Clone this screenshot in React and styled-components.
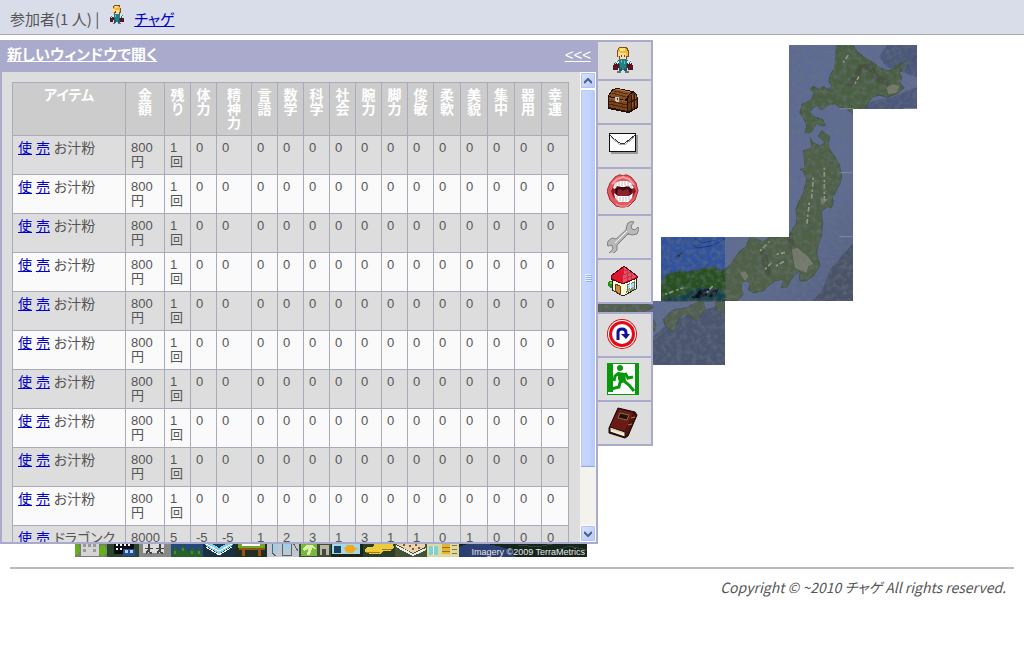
import React from 'react';
import styled, { createGlobalStyle } from 'styled-components';

const Global = createGlobalStyle`
  *, *::before, *::after { box-sizing: border-box; }
  body {
    margin: 0;
    background: #fff;
    color: #555;
    font-family: "Noto Sans CJK JP", "Liberation Sans", sans-serif;
    font-size: 14px;
    line-height: 20px;
    font-feature-settings: "palt";
  }
`;

const Page = styled.div`
  position: relative;
  min-width: 900px;
`;

const TopBar = styled.header`
  display: flex;
  align-items: center;
  gap: 10px;
  height: 35px;
  padding: 4px 10px 0;
  background: #d9dde9;
  border-bottom: 1px solid #aaaaaf;
  font-size: 15px;
  svg { margin-bottom: 8px; }
`;

const Link = styled.a`
  color: #0000c8;
  text-decoration: underline;
`;

const Maps = styled.main`
  display: flex;
  justify-content: center;
  gap: 10px;
  padding: 10px;
`;

const Town = styled.div`
  position: relative;
  width: 512px;
  height: 512px;
  svg { display: block; }
`;

const Credit = styled.small`
  position: absolute;
  right: 2px;
  bottom: 0;
  color: #e8e8e8;
  font-family: "Liberation Sans", sans-serif;
  font-size: 9px;
  line-height: 10px;
`;

const Country = styled.div`
  width: 352px;
  svg { display: block; }
`;

const Footer = styled.footer`
  margin: 0 10px;
  padding: 8px 8px;
  border-top: 2px solid #bbb;
  text-align: right;
  font-size: 14px;
  font-style: italic;
`;

const Overlay = styled.div`
  position: absolute;
  top: 40px;
  left: 0;
  display: flex;
  align-items: flex-start;
`;

const Panel = styled.section`
  display: flex;
  flex-direction: column;
  width: 598px;
  border: solid #aaaacc;
  border-width: 0 2px 2px;
  background: #ddd;
  font-family: "Liberation Sans", "Noto Sans CJK JP", sans-serif;
`;

const TitleBar = styled.div`
  display: flex;
  justify-content: space-between;
  padding: 5px 5px 7px;
  background: #aaaacc;
  font-size: 15px;
`;

const TitleLink = styled(Link)`
  color: #fff;
  font-weight: ${p => (p.$bold ? 700 : 400)};
`;

const PanelBody = styled.div`
  display: flex;
  height: 470px;
  overflow: hidden;
`;

const TableArea = styled.div`
  flex: 1;
  padding: 10px;
  overflow: hidden;
`;

const ItemTable = styled.table`
  width: 557px;
  table-layout: fixed;
  border-collapse: collapse;
  line-height: 14px;
`;

const HeadCell = styled.th`
  padding: 5px;
  border: 1px solid #aaaab8;
  background: #ccc;
  color: #fff;
  vertical-align: top;
  span { display: block; }
`;

const Row = styled.tr`
  background: #ddd;
  &:nth-child(even) { background: #fafafa; }
`;

const Cell = styled.td`
  height: 39px;
  padding: 5px;
  border: 1px solid #aaaab8;
  vertical-align: top;
  font-size: ${p => (p.$name ? 14 : 13)}px;
  white-space: ${p => (p.$name ? 'nowrap' : 'normal')};
  span { display: block; white-space: nowrap; }
`;

const ScrollBar = styled.div`
  display: flex;
  flex-direction: column;
  width: 16px;
  background: #f3f2ec;
`;

const ScrollButton = styled.button`
  display: grid;
  place-items: center;
  width: 16px;
  height: 17px;
  padding: 0;
  border: 1px solid #fff;
  border-radius: 2px;
  background: linear-gradient(135deg, #d8e4ff, #b4c8f6);
  box-shadow: inset 0 0 0 1px #b0c2ee;
`;

const Thumb = styled.div`
  display: grid;
  place-items: center;
  height: 378px;
  border: 1px solid #fff;
  border-bottom-color: #8fa9dc;
  border-radius: 2px;
  background: linear-gradient(90deg, #c8d6fb, #c2d3fd 60%, #b3c6f5);
  box-shadow: inset 0 0 0 1px #b9cbf6;
`;

const Track = styled.div`
  flex: 1;
`;

const Menu = styled.nav`
  display: flex;
  flex-direction: column;
  gap: 8px;
`;

const MenuGroup = styled.div`
  border: solid #aaaacc;
  border-width: 2px 2px 0 0;
  background: #ddd;
`;

const MenuButton = styled.button`
  display: flex;
  width: 53px;
  padding: 5px 9px;
  border: 0;
  border-bottom: 2px solid #aaaacc;
  background: #ddd;
  cursor: pointer;
`;

const Hero = ({ width = 32, height = 27 }) => (
  <svg width={width} height={height} viewBox={width === 32 ? '0 0 32 27' : '5 0 21 27'} aria-hidden="true" shapeRendering="crispEdges">
    <path d="M12 0h8v1h1v2h1v7h-2v2h-8v-2h-2V3h1V1h1z" fill="#8a4a18" />
    <path d="M12 1h7v1h1v2h1v5h-2V6h-7v4h-1V3h1z" fill="#f2ba32" />
    <path d="M13 1h5v3h-5zM11 5h2v4h-2z" fill="#ffe27a" />
    <path d="M13 6h6v6h-6z" fill="#f8dcb4" />
    <path d="M14 8h1v2h-1zM17 8h1v2h-1z" fill="#7a3a28" />
    <path d="M7 15h3v-2h12v2h3v3h1v5h-5v-2H11v2H6v-5h1z" fill="#571421" />
    <path d="M10 13h12v4h-2v6h-8v-6h-2z" fill="#17545c" />
    <path d="M12 12h8v5h-1v6h-6v-6h-1z" fill="#218184" />
    <path d="M7 13h4v1h1v2h-1v1h-1v-1H9v1H8v-1H7zM21 13h4v3h-1v1h-1v-1h-1v1h-1v-1h-1v-2h1z" fill="#dcebf0" />
    <path d="M8 15h1v1H8zM10 14h1v1h-1zM22 15h1v1h-1zM23 14h1v1h-1z" fill="#2a8d92" />
    <path d="M14 13h1v3h-1zM17 14h1v3h-1z" fill="#60bac0" />
    <path d="M12 21h3v3h-3zM17 21h3v3h-3z" fill="#1d5f68" />
    <path d="M10 24h4v2h-4zM18 24h4v2h-4z" fill="#6a6f80" />
  </svg>
);

const Chest = () => (
  <svg width="32" height="32" viewBox="0 0 32 32" aria-hidden="true" shapeRendering="crispEdges">
    <path d="M5 3l5-1 16 3 4 3 1 5v9l-9 5L1 23V10z" fill="#241006" />
    <path d="M6 4l4-1 15 3-3 2-4 6-16-4z" fill="#855023" />
    <path d="M7 5l14 3M5 7l14 4" stroke="#58300f" fill="none" />
    <path d="M9 3l14 3" stroke="#b37a40" fill="none" />
    <path d="M2 11l18 4v10L2 21z" fill="#78451c" />
    <path d="M2 15l18 4M2 18l18 4" stroke="#4c260b" fill="none" />
    <path d="M2 12l18 4" stroke="#9a602c" fill="none" />
    <path d="M21 15c0-4 2-8 5-8s4 3 4 6v8l-9 4z" fill="#653513" />
    <path d="M24 9v14M27 8v14M30 13l-9 4" stroke="#2e1608" fill="none" />
    <path d="M25 9v4M28 9v4M25 16v5M28 15v5" stroke="#94592a" fill="none" />
    <path d="M8 11h4v5H9l-1-2z" fill="#c8c8c4" /><path d="M10 12h1v2h-1z" fill="#333" />
  </svg>
);

const Mail = () => (
  <svg width="32" height="32" viewBox="0 0 32 32" aria-hidden="true" shapeRendering="crispEdges">
    <path d="M4 5h27v19H4z" fill="#999" />
    <path d="M2 3h27v19H2z" fill="#111" /><path d="M3 4h25v17H3z" fill="#fff" />
    <path d="M3 5l3 3 5 4 4 2 3-1 5-4 5-4" stroke="#333" fill="none" />
    <path d="M4 7l8 7 3 1 4-1 8-7" stroke="#aaa" fill="none" />
  </svg>
);

const Mouth = () => (
  <svg width="32" height="35" viewBox="0 0 32 35" aria-hidden="true">
    <path d="M3 9L8 3l4-2h2l2 1 2-1h2l4 2 5 6 2 8-3 9-6 6-5 1h-3l-5-1-6-6-3-9z" fill="#e05b61" stroke="#ad2934" />
    <path d="M5 10l5-5 6-2 6 2 5 6" stroke="#ff9da0" strokeWidth="2" fill="none" />
    <path d="M4 17l3-6 6-4h7l6 4 3 6-3 6-6 5h-7l-7-5z" fill="#8e1825" />
    <path d="M6 14l2-5 5-2h7l4 2 3 5-3 1-2-3h-2l-3 1h-3l-2-1h-2l-2 3z" fill="#fff" />
    <path d="M9 9v4M12 7v6M15 7v5M18 7v5M21 8v5M24 10v4" stroke="#c8b4b4" />
    <path d="M8 15l4-2h9l4 2-1 6H9z" fill="#36080e" />
    <path d="M10 20l1-5 5 1 5-1 2 5-4 3h-6z" fill="#8e2030" />
    <path d="M15 13h2v4h-2z" fill="#4a0a12" />
    <path d="M7 19l4 3h11l4-3-1 5-4 4h-9l-4-4z" fill="#fff" />
    <path d="M10 22v4M13 23v4M16 23v5M19 23v4M22 22v4" stroke="#c8b4b4" />
    <path d="M9 30l4 2h7l4-3" stroke="#ffa5a5" fill="none" />
  </svg>
);

const Wrench = () => (
  <svg width="32" height="32" viewBox="0 0 32 32" aria-hidden="true">
    <path d="M21 2l4-2 2 1-3 4 1 3 3 1 3-3 1 2-2 5-5 1-4-1-11 11v5l-3 3-4 1-1-1 4-4-1-4-4 1-1-1 1-4 4-3 4 1L19 9l1-5z" fill="#b9b9b9" stroke="#808080" />
    <path d="M20 10L8 22" stroke="#f4f4f4" fill="none" />
    <path d="M22 12L11 23" stroke="#777" fill="none" />
  </svg>
);

const House = () => (
  <svg width="32" height="32" viewBox="0 0 32 32" aria-hidden="true" shapeRendering="crispEdges">
    <path d="M2 16h4v7H3l-2-2v-3z" fill="#268a22" /><path d="M3 17h2v2H3z" fill="#85c842" />
    <path d="M5 13l11 5 13-5v11l-13 7-11-6z" fill="#fff9d2" stroke="#222" />
    <path d="M17 1L4 11v3l12 5 14-6v-2z" fill="#c90c24" stroke="#5e0610" />
    <path d="M17 2L5 11v2l11 5z" fill="#dc1830" />
    <path d="M17 2l-1 16 13-6v-1z" fill="#dd5468" />
    <path d="M17 6l4-1M17 10l7-3M17 14l9-4M20 5v11M24 8v6" stroke="#c8304a" fill="none" />
    <path d="M8 19l5 2v8l-5-3z" fill="#ce8d45" stroke="#684018" />
    <path d="M20 20l7-3v5l-7 3z" fill="#9ee7ff" stroke="#577" />
    <path d="M23 18v6" stroke="#fff" /><path d="M19 26l9-4v2l-9 4z" fill="#55ac34" />
    <path d="M21 24h2v2h-2zM25 22h2v2h-2z" fill="#ef79ad" />
  </svg>
);

const UTurn = () => (
  <svg width="32" height="32" viewBox="0 0 32 32" aria-hidden="true">
    <circle cx="15" cy="15" r="15" fill="#e30a16" /><circle cx="15" cy="15" r="14" fill="#fff" />
    <circle cx="15" cy="15" r="13" fill="#e30a16" /><circle cx="15" cy="15" r="10" fill="#fff" />
    <path d="M11 21v-8q0-3 4-3t4 4v2" fill="none" stroke="#101098" strokeWidth="3" />
    <path d="M14 15h9l-4 5z" fill="#101098" />
  </svg>
);

const Exit = () => (
  <svg width="32" height="32" viewBox="0 0 32 32" aria-hidden="true">
    <path d="M0 0h32v32H0z" fill="#08980b" /><path d="M6 1h22v30H1v-2h5z" fill="#fff" />
    <circle cx="13" cy="5" r="3" fill="#08980b" />
    <path d="M11 9l7 1 1 8-6 3-2-5z" fill="#08980b" />
    <path d="M12 10l-4 3-1 5M18 10l3 5 5-1M17 18l5 4 5 6M13 19l-1 5-8 2" fill="none" stroke="#08980b" strokeWidth="3" />
  </svg>
);

const Book = () => (
  <svg width="32" height="32" viewBox="0 0 32 32" aria-hidden="true">
    <path d="M11 1l17 4 2 3-9 21-3 2L2 26v-5z" fill="#43100d" stroke="#180504" />
    <path d="M12 2l14 4-8 18L3 20z" fill="#6b1a17" />
    <path d="M26 7l2 2-8 19-2 1v-5z" fill="#4e1511" />
    <path d="M3 20l15 5v5L3 25z" fill="#f4ecd5" stroke="#211" />
    <path d="M4 22l13 4" stroke="#d8caaa" />
    <path d="M13 6l9 2-2 5-9-2z" fill="#221010" stroke="#86703b" />
    <path d="M28 10l-4 1M25 17l-4 1" stroke="#b08040" />
  </svg>
);

const CountryMap = () => (
  <svg width="320" height="320" viewBox="0 0 320 320" role="img" aria-label="Japan">
    <defs>
      <filter id="terrain" x="0" y="0" width="100%" height="100%">
        <feTurbulence type="fractalNoise" baseFrequency="0.2" numOctaves="4" seed="8" />
        <feColorMatrix values="0 0 0 0 0.15  0 0 0 0 0.17  0 0 0 0 0.2  1.800 0 0 0 -0.700" />
      </filter>
      <clipPath id="tiles">
        <path d="M192 0h128v64h-64v192H128v64H0v-64h64v-64h128z" />
      </clipPath>
      <linearGradient id="sea" x1="0" y1="0" x2="1" y2="1">
        <stop offset="0" stopColor="#5a6994" /><stop offset=".6" stopColor="#5f6d94" /><stop offset="1" stopColor="#4a5571" />
      </linearGradient>
    </defs>
    <g clipPath="url(#tiles)">
      <path d="M0 0h320v320H0z" fill="url(#sea)" />
      <path d="M10 320l15-14 24-8 18-16 25-13 36-10v61z" fill="#4a5570" />
      <path d="M216 256l10-12 6-18 12-14 12-14v58z" fill="#495368" />
      <path d="M290 0l-8 12 8 10 30 10V0zM262 64l14-8 20-4 24-10v22z" fill="#4b587b" />
      <path d="M64 192h64v64H64z" fill="#2f529f" />
      <path d="M94 199l6 4 14-2 14-7M98 194l8 4 12-3" stroke="#1c3a78" fill="none" />
      <g transform="translate(43 -9) scale(.333333)" stroke="#3d4c3c" strokeWidth="2">
        <path d="M590 20L635 20 650 45 675 65 700 80 720 95 745 105 760 98 785 78 795 85 778 110 785 125 780 140 792 155 775 172 740 185 720 178 700 182 685 200 675 222 640 235 618 217 600 215 585 204 570 205 545 222 530 210 518 215 510 232 525 243 548 250 557 268 545 270 530 262 522 275 512 290 495 290 500 270 495 255 480 230 485 205 500 198 515 190 522 170 510 160 520 150 535 160 550 152 565 160 575 150 566 135 570 120 585 90z" fill="#4a5f42" />
        <path d="M545 283L558 295 570 300 565 320 568 340 583 360 598 385 605 420 600 445 592 455 585 475 575 480 580 495 575 515 562 512 545 525 545 540 548 560 545 600 535 625 530 650 540 690 530 705 520 720 500 735 480 735 478 715 490 700 465 715 450 735 440 755 425 755 430 730 405 735 385 750 370 765 340 770 325 760 330 740 315 735 305 740 303 760 310 775 290 795 255 795 255 700 272 685 285 665 300 645 320 630 330 600 370 618 385 605 445 600 458 580 470 560 468 520 475 500 490 470 500 430 490 405 480 400 495 395 490 345 515 335 510 305 520 320 540 330 555 320 535 300z" fill="#4e6045" />
        <path d="M63 745l17-30 40-10 20 3 40-8 45-10 8 12 22 0v93H63z" fill="#26501f" />
        <path d="M63 790l70-15 40-20 60 2 22 13v25H63z" fill="#12404a" />
        <path d="M150 785l30-25 30-3-8 22-20 10zM205 785l8-22 25-5-10 25z" fill="#031221" />
        <path d="M80 840l18-18 42-7 25-14 25-4 6 23-26 35-15-12-25-8-10 10-10 20-5 15-10 5-20-15-5-20zM225 800l30-5v40l-25-12zM-129 802l60-7 80 5 30 14-60 30-110-5zM35 845l13 20-4 20-14-10z" fill="#515f4f" />
        <path d="M110 662l6-8 6 8zM121 650l6 2-4 5z" fill="#132d26" />
        <path d="M800 100l10-20 21-20M785 105l-8-14 25-20" fill="none" />
      </g>
      <g transform="translate(43 -9) scale(.333333)" fill="none">
        <path d="M630 145l20-20 10-30 30-5 15 30 35 20M370 650l15 60M450 600l20 70" stroke="#404638" strokeWidth="18" strokeLinecap="round" strokeLinejoin="round" opacity=".5" />
        <path d="M645 143l12-22M610 80l16-25M553 395v100M520 425l-6 70M508 500l-8 70M360 645l28-28M375 700l25-25M408 690l28-16M410 655l25-6M75 775l55-20M200 770l20-22" stroke="#979e8e" strokeWidth="5" strokeDasharray="7 6 14 9" />
        <path d="M455 640l18-5 12 12 20 15 15 23-15 5-5 20-15-5-20-10-5-25z M540 485l25 5-20 18z M300 710l15-4 10 14-10 15z M740 155l20-10 18 5-8 20-25 5z" fill="#8d8d80" opacity=".65" />
        <path d="M598 410h41M598 602h41M598 218h41M790 218h41" stroke="#9aa2af" strokeWidth="2" />
      </g>
      <path d="M0 0h320v320H0z" filter="url(#terrain)" opacity=".7" />
    </g>
  </svg>
);

const TownMap = () => (
  <svg width="512" height="512" viewBox="0 0 512 512" role="img" aria-label="町" shapeRendering="crispEdges">
    <path d="M0 0h512v512H0z" fill="#25351f" />
    <g transform="translate(0 498)">
      <path d="M0 0h32v14H0z" fill="#777c74" /><path d="M0 0h4l1 8-2 4H0zM26 2h4l2 7-3 4h-4l-1-5z" fill="#65ae1c" />
      <path d="M6 0h18v13H6z" fill="#d4d4d4" /><path d="M8 1h3v3H8zM13 1h3v3h-3zM18 1h3v3h-3zM8 6h3v3H8zM18 6h3v3h-3z" fill="#999" />
      <path d="M32 0h32v14H32z" fill="#2a452b" /><path d="M39 0h20v11H39z" fill="#0a0a12" /><path d="M41 1h2v2h-2zM45 1h2v2h-2zM49 1h2v2h-2zM53 1h2v2h-2zM41 5h2v2h-2zM45 5h2v2h-2z" fill="#fff" /><path d="M48 6h12v7H48z" fill="#264d91" /><path d="M50 7h3v3h-3zM55 7h3v3h-3z" fill="#afd2ef" />
      <path d="M64 0h32v14H64z" fill="#858885" /><path d="M68 0h21v10H68z" fill="#ddd" /><path d="M73 1h2v4h3v1h-3v3h2v2h-2l-2-2-2 2v-2l2-3h-3V5h3zM84 1h2v4h3v1h-3v3h2v2h-2l-2-2-2 2v-2l2-3h-3V5h3z" fill="#444" />
      <path d="M96 0h32v14H96z" fill="#27487a" /><path d="M96 14l4-11 4 6 4-8 5 9 4-6 4 5 3-5 4 10z" fill="#27622c" />
      <path d="M99 8h2v3h-2zM107 5h2v3h-2zM116 8h2v3h-2zM123 8h2v3h-2z" fill="#4d8a3a" />
      <path d="M128 0h32v14h-32z" fill="#193142" /><path d="M130 2l14 9 14-9V0h-28z" fill="#83d0ed" /><path d="M131 4l13 8 13-8M131 1l13 7 13-7" stroke="#fff" fill="none" />
      <path d="M136 0h16l-8 5z" fill="#1d3f55" />
      <path d="M160 0h32v14h-32z" fill="#222d22" /><path d="M163 0h27v5h-27z" fill="#73a52a" /><path d="M167 0h18v3h-18z" fill="#fff" /><path d="M164 5h26v2h-4v6h-3V7h-13v6h-3V7h-3z" fill="#945213" />
      <path d="M192 0h32v14h-32z" fill="#c1c8cf" /><path d="M197 0v10l4 3M207 0h9v12h-9zM218 0l5 8" stroke="#59646e" fill="none" /><path d="M208 1h7v5h-7zM198 2h5v6h-5z" fill="#9ed0ee" />
      <path d="M224 0h32v14h-32z" fill="#444b35" /><path d="M226 0h16v13h-16z" fill="#75b842" /><path d="M228 5l3-3h6l4 4-4-1-2 7h-3l1-6-4 2z" fill="#dff0a5" /><path d="M245 2h9v10h-3V6h-4v6h-2z" fill="#b5b5aa" />
      <path d="M256 0h32v14h-32z" fill="#18261c" /><path d="M257 1h28v10h-28z" fill="#a5d7e5" /><path d="M259 3h7v7h-7z" fill="#173f62" /><path d="M269 5l3-3h5l3 3h4l-4 2-3 3h-5z" fill="#eeaa23" />
      <path d="M288 0h32v14h-32z" fill="#293e24" /><path d="M290 6l3-2h5l2-4h17l2 4-3 4h-8l-3 3h-10l-5-2z" fill="#eacb3d" /><path d="M291 9h14M307 6h10" stroke="#a47816" />
      <path d="M320 0h32v14h-32z" fill="#435333" /><path d="M321 1l17 9 12-6V0h-29z" fill="#e9d4ae" /><path d="M321 3l17 9 13-6" stroke="#eee" strokeWidth="2" fill="none" /><path d="M328 1h2v2h-2zM334 2h2v2h-2zM340 1h2v2h-2zM337 5h2v2h-2zM343 4h2v2h-2z" fill="#7e5b46" />
      <path d="M352 0h32v14h-32z" fill="#ddd9a0" /><path d="M354 3h9v9h-9z" fill="#80d1d5" /><path d="M358 3h1v9h-1z" fill="#fff" /><path d="M367 1h8v10h-8z" fill="#e4b52c" /><path d="M377 2h5M377 6h5M377 10h5M367 4h8M367 8h8" stroke="#8a7638" />
      <path d="M384 0h128v14H384z" fill="#16241e" /><path d="M384 4l8-3 15-1 20 4 11 4 2 6h-56z" fill="#2b3f70" />
      <path d="M443 2l19 2 15-3M474 10l20-7 18 4" stroke="#304632" fill="none" />
    </g>
  </svg>
);

const Chevron = ({ down }) => (
  <svg width="8" height="6" viewBox="0 0 8 6" aria-hidden="true">
    <path d={down ? 'M0 1l4 4 4-4' : 'M0 5l4-4 4 4'} fill="none" stroke="#4d6185" strokeWidth="2" />
  </svg>
);

const Grip = () => (
  <svg width="7" height="8" viewBox="0 0 7 8" aria-hidden="true" shapeRendering="crispEdges">
    <path d="M0 0h6v1H0zM0 2h6v1H0zM0 4h6v1H0zM0 6h6v1H0z" fill="#eef4fe" />
    <path d="M1 1h6v1H1zM1 3h6v1H1zM1 5h6v1H1zM1 7h6v1H1z" fill="#8cb0f8" />
  </svg>
);

const widths = [113, 39, 26, 26, 35, 26, 26, 26, 26, 26, 26, 26, 27, 27, 27, 27, 27];
const heads = ['金額', '残り', '体力', '精神力', '言語', '数学', '科学', '社会', '腕力', '脚力', '俊敏', '柔軟', '美貌', '集中', '器用', '幸運'];
const soup = { name: 'お汁粉', price: 800, left: 1, stats: Array(14).fill(0) };
const items = [
  ...Array(10).fill(soup),
  { name: 'ドラゴンク', price: 8000, left: 5, stats: [-5, -5, 1, 2, 3, 1, 3, 1, 1, 0, 1, 0, 0, 0] },
];
const menu = [
  [['ステータス', Hero], ['アイテム', Chest], ['メール', Mail], ['発言', Mouth], ['設定', Wrench], ['家', House]],
  [['戻る', UTurn], ['退出', Exit], ['説明書', Book]],
];

export default function App() {
  return (
    <Page>
      <Global />
      <TopBar>
        <span>参加者(1 人) |</span>
        <Hero width={15} height={20} />
        <Link href="#user">チャゲ</Link>
      </TopBar>
      <Maps>
        <Town>
          <TownMap />
          <Credit>Imagery ©2009 TerraMetrics</Credit>
        </Town>
        <Country><CountryMap /></Country>
      </Maps>
      <Footer>Copyright © ~2010 チャゲ All rights reserved.</Footer>

      <Overlay>
        <Panel>
          <TitleBar>
            <TitleLink href="#window" $bold>新しいウィンドウで開く</TitleLink>
            <TitleLink href="#close">&lt;&lt;&lt;</TitleLink>
          </TitleBar>
          <PanelBody>
            <TableArea>
              <ItemTable>
                <colgroup>{widths.map((w, i) => <col key={i} width={w} />)}</colgroup>
                <thead>
                  <tr>
                    <HeadCell scope="col">アイテム</HeadCell>
                    {heads.map(h => (
                      <HeadCell key={h} scope="col">{[...h].map(c => <span key={c}>{c}</span>)}</HeadCell>
                    ))}
                  </tr>
                </thead>
                <tbody>
                  {items.map((it, i) => (
                    <Row key={i}>
                      <Cell $name><Link href="#use">使</Link> <Link href="#sell">売</Link> {it.name}</Cell>
                      <Cell><span>{it.price}</span><span>円</span></Cell>
                      <Cell><span>{it.left}</span><span>回</span></Cell>
                      {it.stats.map((s, j) => <Cell key={j}><span>{s}</span></Cell>)}
                    </Row>
                  ))}
                </tbody>
              </ItemTable>
            </TableArea>
            <ScrollBar>
              <ScrollButton aria-label="上へ"><Chevron /></ScrollButton>
              <Thumb><Grip /></Thumb>
              <Track />
              <ScrollButton aria-label="下へ"><Chevron down /></ScrollButton>
            </ScrollBar>
          </PanelBody>
        </Panel>
        <Menu>
          {menu.map((group, g) => (
            <MenuGroup key={g}>
              {group.map(([label, Icon]) => (
                <MenuButton key={label} aria-label={label}><Icon /></MenuButton>
              ))}
            </MenuGroup>
          ))}
        </Menu>
      </Overlay>
    </Page>
  );
}
